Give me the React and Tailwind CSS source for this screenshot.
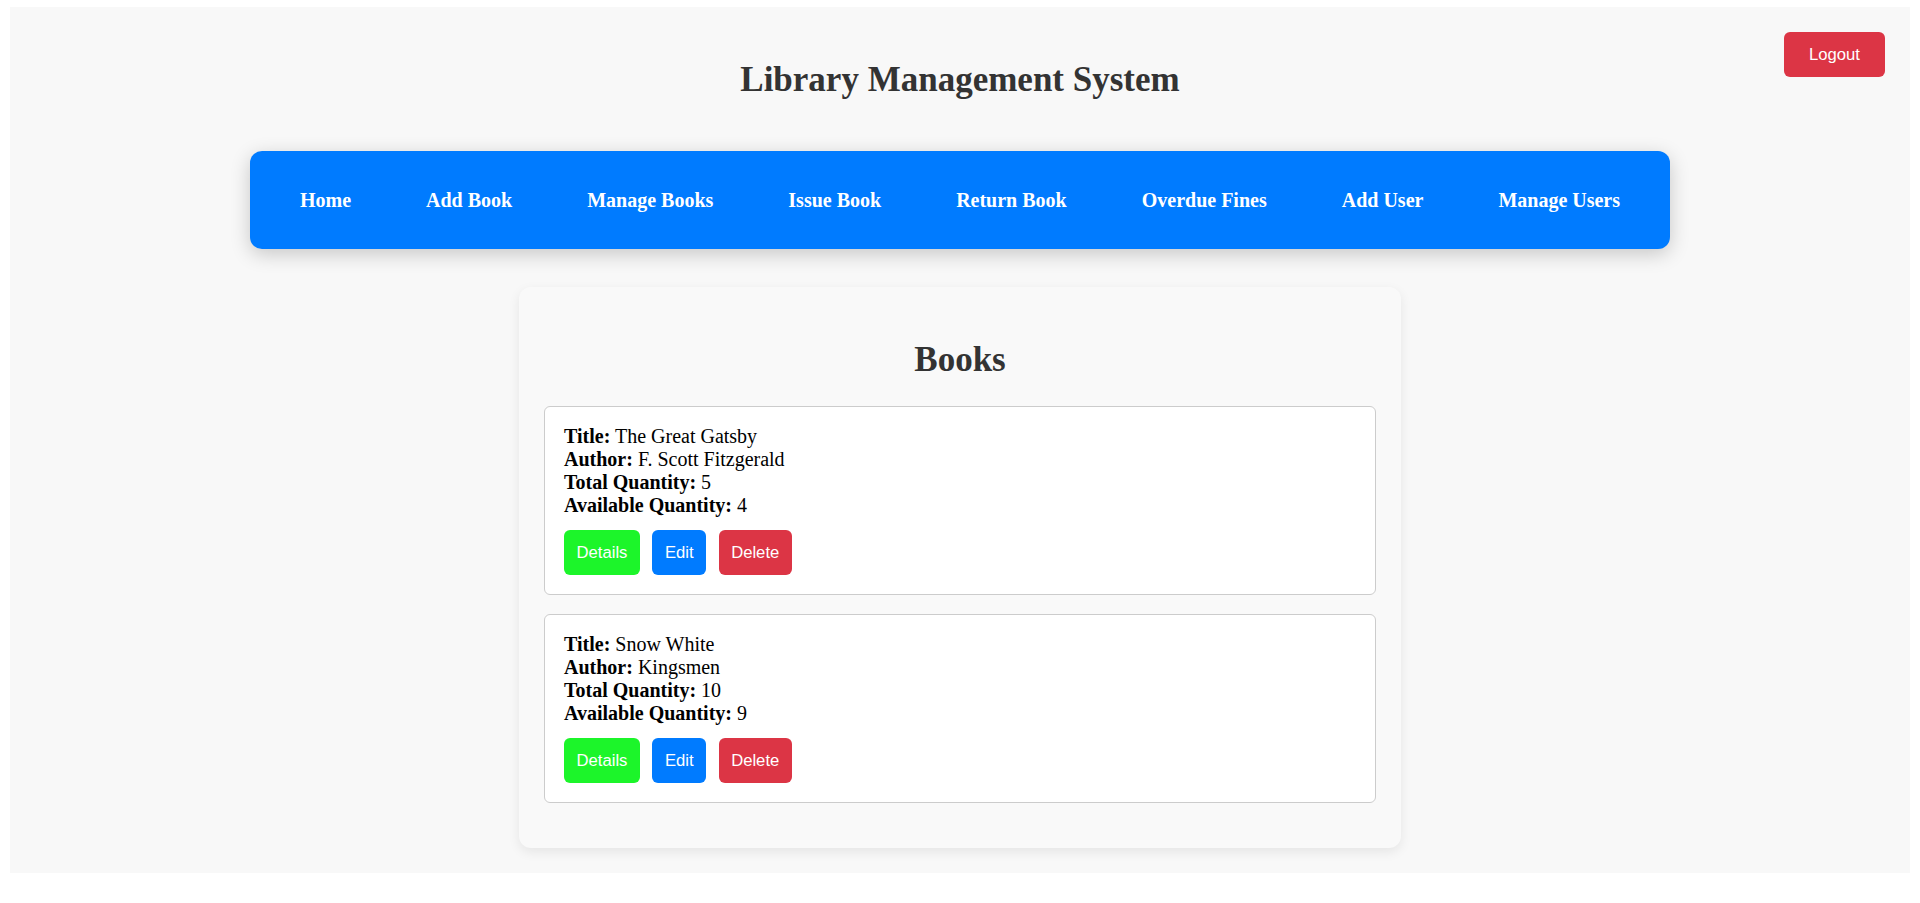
import React from "react";

const books = [
  { id: 1, title: "The Great Gatsby", author: "F. Scott Fitzgerald", total: 5, available: 4 },
  { id: 2, title: "Snow White", author: "Kingsmen", total: 10, available: 9 },
];

const navLinks = [
  "Home",
  "Add Book",
  "Manage Books",
  "Issue Book",
  "Return Book",
  "Overdue Fines",
  "Add User",
  "Manage Users",
];

const serif = "font-['Liberation_Serif','Times_New_Roman',serif]";
const sans = "font-['Liberation_Sans',Arial,sans-serif]";

const BookCard = ({ book }) => {
  return (
    <div className="bg-white border border-[#cccccc] rounded-[6px] px-[19px] pt-[18px] pb-[19px] mb-[19px]">
      <div className="text-[20px] leading-[23px] text-black">
        <div>
          <strong>Title:</strong> {book.title}
        </div>
        <div>
          <strong>Author:</strong> {book.author}
        </div>
        <div>
          <strong>Total Quantity:</strong> {book.total}
        </div>
        <div>
          <strong>Available Quantity:</strong> {book.available}
        </div>
      </div>
      <div className={`flex gap-[12.5px] mt-[13px] ${sans}`}>
        <button className="h-[45px] px-[12.5px] rounded-[6px] bg-[#1cf52a] text-white text-[16.67px]">
          Details
        </button>
        <button className="h-[45px] px-[12.5px] rounded-[6px] bg-[#007bff] text-white text-[16.67px]">
          Edit
        </button>
        <button className="h-[45px] px-[12.5px] rounded-[6px] bg-[#dc3545] text-white text-[16.67px]">
          Delete
        </button>
      </div>
    </div>
  );
};

const App = () => {
  return (
    <div className={`min-h-screen bg-white pt-[7px] px-[10px] ${serif}`}>
      <div className="relative bg-[#f8f8f8] pt-[53px] pb-[25px]">
        <button
          className={`absolute top-[25px] right-[25px] w-[101px] h-[45px] rounded-[6px] bg-[#dc3545] text-white text-[16.67px] ${sans}`}
        >
          Logout
        </button>

        <h1 className="text-center text-[35px] leading-[40px] font-bold text-[#333333]">
          Library Management System
        </h1>

        <nav className="mt-[51px] mx-auto w-[1420px] h-[98px] bg-[#007bff] rounded-[12px] shadow-[0_5px_20px_rgba(0,0,0,0.2)] flex items-center justify-center gap-[75px]">
          {navLinks.map((link) => (
            <a key={link} className="text-white font-bold text-[20px] leading-[23px] cursor-pointer">
              {link}
            </a>
          ))}
        </nav>

        <div className="mt-[38px] mx-auto w-[882px] bg-[#f9f9f9] rounded-[12px] shadow-[0_4px_12px_rgba(0,0,0,0.08)] px-[25px] pt-[53px] pb-[26px]">
          <h2 className="text-center text-[35px] leading-[40px] font-bold text-[#333333] mb-[26px]">
            Books
          </h2>
          {books.map((book) => (
            <BookCard key={book.id} book={book} />
          ))}
        </div>
      </div>
    </div>
  );
};

export default App;
